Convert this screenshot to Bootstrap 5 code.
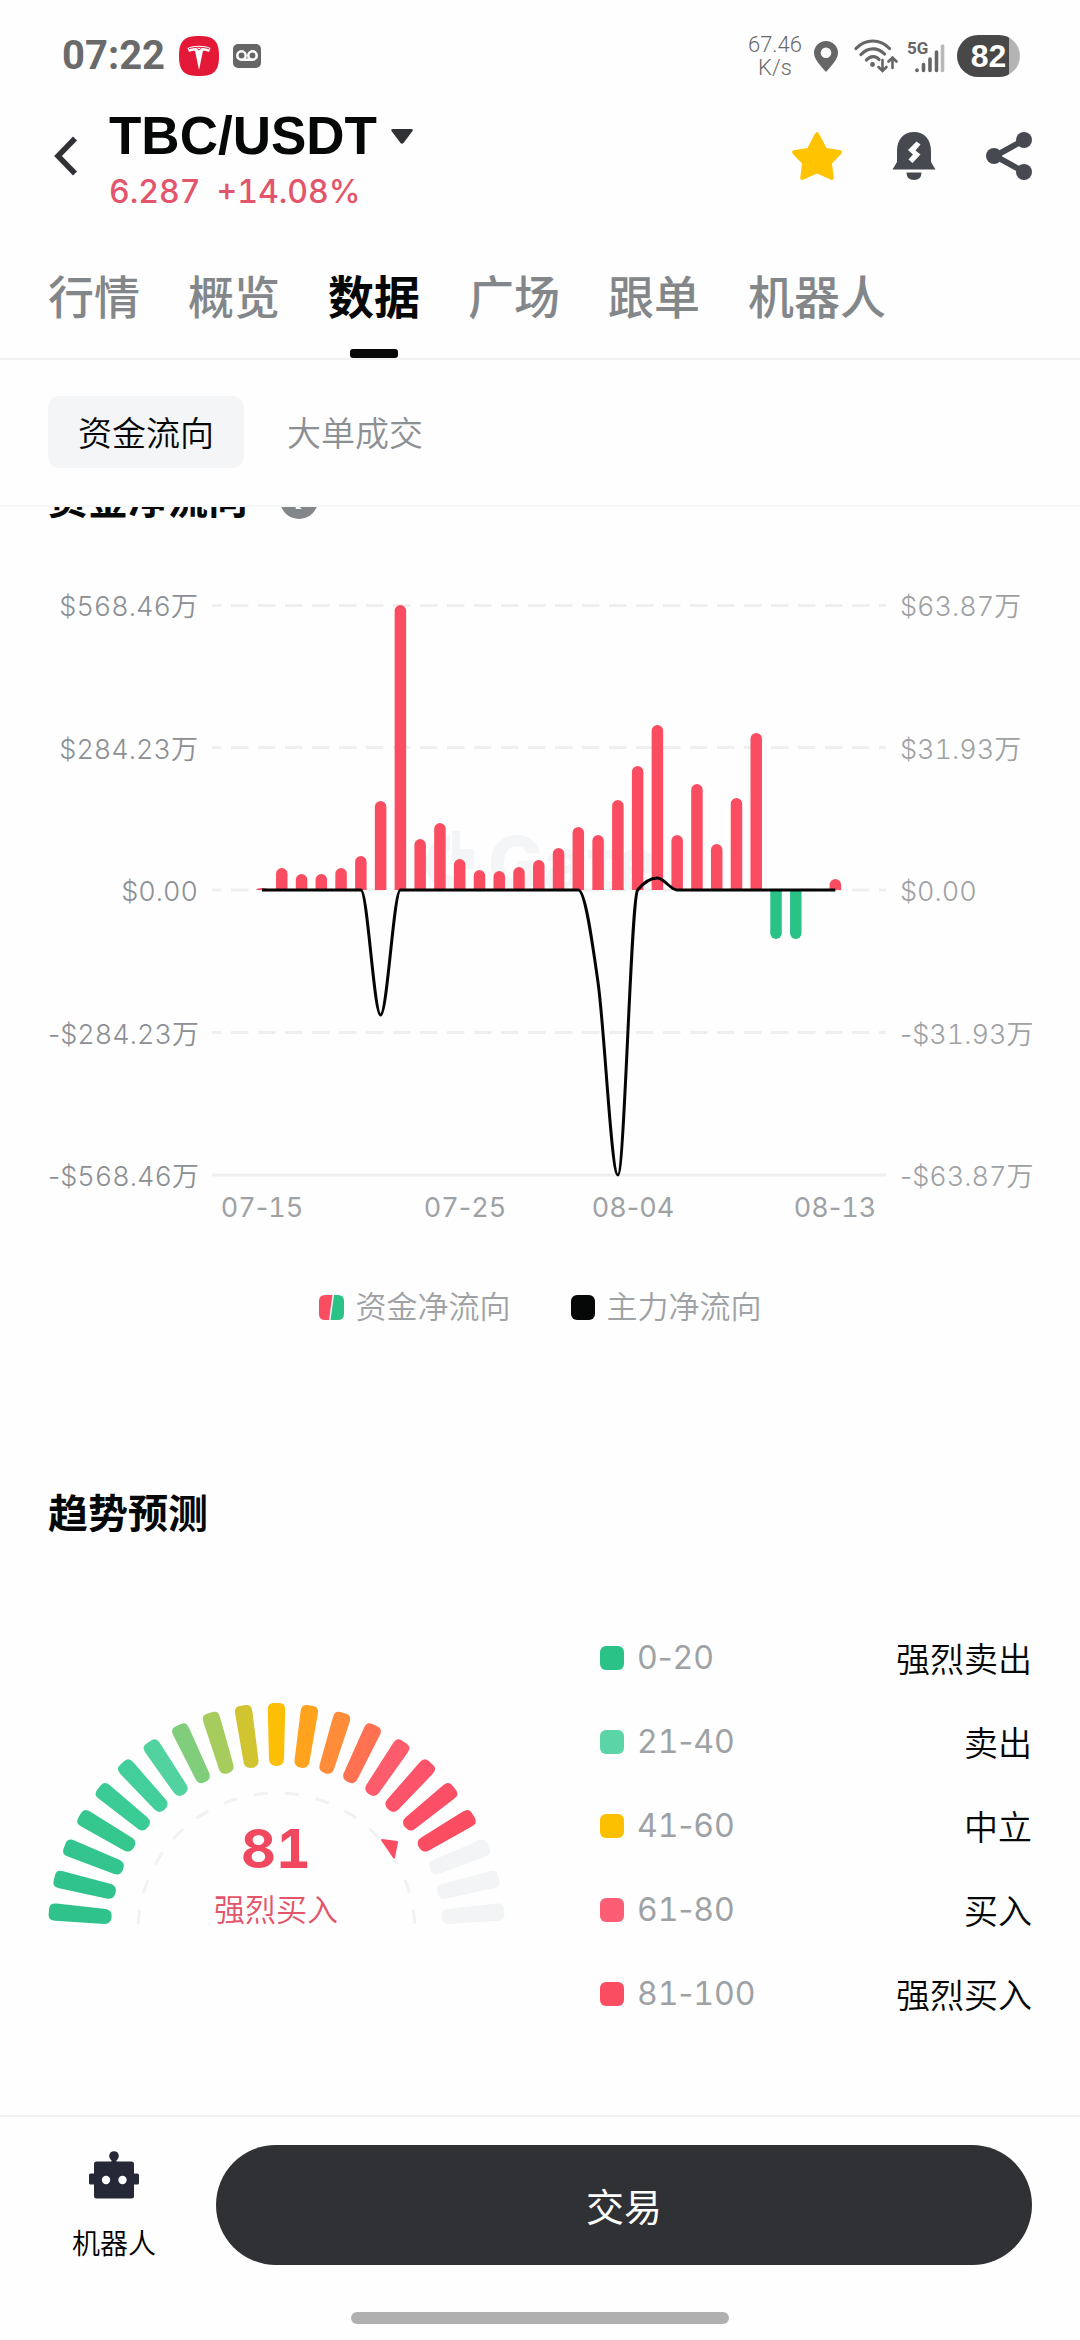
<!DOCTYPE html>
<html lang="zh-CN">
<head>
<meta charset="utf-8">
<meta name="viewport" content="width=device-width, initial-scale=1">
<title>TBC/USDT</title>
<link href="https://cdn.jsdelivr.net/npm/bootstrap@5.3.0/dist/css/bootstrap.min.css" rel="stylesheet">
<style>
  :root { --up: #fa4d61; --down: #2bc287; --ink: #060808; --mute: #84878a; --soft: #9fa2a5; --rule: #f0f1f2; }
  body { font-family: Inter, "Noto Sans CJK SC", sans-serif; color: var(--ink); background: #fefefe; font-variant-numeric: tabular-nums; }
  a { text-decoration: none; color: inherit; }
  svg { display: block; flex: none; }
  .gutter { padding-left: 48px; padding-right: 48px; }
  .top-stack { z-index: 10; background: #fefefe; }
  .dash { font-variant-numeric: normal; }

  .status-strip { height: 104px; padding: 8px 60px 0 62px; color: #6a6a6a; }
  .clock { font: 700 40px/48px Roboto, sans-serif; }
  .status-left { gap: 14px; }
  .status-right { gap: 12px; }
  .net-speed { font: 300 22px/23px Roboto, sans-serif; text-align: center; }
  .net-speed span { display: block; }
  .pin-icon { margin-right: 4px; }
  .signal-icon { margin-left: -4px; overflow: visible; }
  .battery-pill { width: 63px; height: 42px; border-radius: 21px; background: linear-gradient(90deg, #484848 82%, #b3b3b3 82%); color: #fff; font: 700 32px/42px "Liberation Sans", sans-serif; }

  .plain-btn { border: 0; background: none; padding: 0; }
  .back-btn { padding: 0 32px 8px 6px; }
  .pair-name { font: 700 53px/64px "Liberation Sans", sans-serif; }
  .pair-line { gap: 14px; }
  .pair-price { font-size: 32px; line-height: 48px; font-weight: 500; color: #e2556a; gap: 16px; }
  .tool-gap { gap: 50px; margin-bottom: 8px; }

  .main-tabs { gap: 48px; border-bottom: 2px solid var(--rule); }
  .main-tabs a { position: relative; padding: 51px 0 31px; font-size: 46px; line-height: 60px; font-weight: 500; color: var(--mute); white-space: nowrap; }
  .main-tabs a.active { color: var(--ink); font-weight: 700; }
  .main-tabs a.active::after { content: ""; position: absolute; left: 50%; bottom: 0; width: 48px; height: 9px; margin-left: -24px; border-radius: 3px; background: var(--ink); }

  .sub-tabs { gap: 13px; padding-top: 36px; padding-bottom: 37px; border-bottom: 2px solid #f6f7f7; }
  .sub-tabs a { padding: 4px 30px 0; font-size: 34px; line-height: 68px; font-weight: 350; border-radius: 12px; color: #8d9093; }
  .sub-tabs a.active { background: #f4f5f7; color: var(--ink); }

  .block-title { font-size: 40px; line-height: 40px; font-weight: 700; margin: 0; }
  .flow-title { margin-top: -27px; gap: 32px; }
  .help-dot { width: 38px; height: 38px; border-radius: 19px; background: #84878a; color: #fff; font: italic 700 28px/38px "Liberation Serif", serif; text-align: center; }

  .flow-chart { margin-top: 72px; gap: 14px; }
  .axis-col { height: 600px; font-size: 27px; line-height: 30px; white-space: nowrap; font-weight: 350; }
  .axis-left { width: 150px; color: #8c8f93; text-align: right; }
  .axis-right { width: 132px; color: var(--soft); }
  .plot-col { min-width: 0; padding-top: 13px; }
  .plot-col svg, .gauge-col svg { width: 100%; height: auto; overflow: visible; }
  .tick-text { font-size: 27px; fill: var(--soft); text-anchor: middle; }

  .series-legend { margin-top: 65px; gap: 60px; font-size: 31px; line-height: 40px; font-weight: 350; color: var(--soft); }
  .series-legend span { gap: 12px; }

  .trend-title { margin-top: 167px; }
  .trend-row { margin-top: 82px; gap: 96px; }
  .gauge-col { flex: 456 1 0; }
  .range-list { flex: 432 1 0; margin: 0; }
  .range-list li { height: 84px; font-size: 34px; line-height: 40px; }
  .range-key { color: var(--soft); font-size: 32px; }
  .range-val { padding-top: 4px; font-weight: 350; }
  .swatch { width: 24px; height: 24px; border-radius: 6px; margin-right: 13px; }
  .tone-ss { background: #2bc287; } .tone-s { background: #5bd5a6; } .tone-n { background: #fcc000; } .tone-b { background: #fb5d74; } .tone-sb { background: #fa4d61; }

  .action-dock { border-top: 2px solid var(--rule); padding-top: 28px; }
  .dock-row { gap: 36px; }
  .bot-link { width: 132px; padding-top: 6px; gap: 25px; font-size: 28px; line-height: 40px; font-weight: 350; color: #000; }
  .trade-btn { height: 120px; border-radius: 60px; border: 0; background: #303135; color: #fff; font-size: 38px; padding-top: 10px; }
  .trade-btn:hover { background: #3a3b40; color: #fff; }
  .home-bar { width: 378px; height: 12px; border-radius: 6px; background: #b0b0b0; margin: 47px auto 16px; }
</style>
</head>
<body>
<div class="d-flex flex-column min-vh-100">

  <header class="top-stack position-sticky top-0">
    <div class="status-strip d-flex align-items-center justify-content-between">
      <div class="status-left d-flex align-items-center">
        <span class="clock">07:22</span>
        <svg width="40" height="40" viewBox="0 0 40 40"><path d="M20 0c15 0 20 5 20 20s-5 20-20 20S0 35 0 20 5 0 20 0z" fill="#e31937"/><path d="M8.500 12c6-3 17-3 23 0l-1.500 4c-2-1-4-1.300-6-1.300L20 34l-4-19.300c-2 0-4 .3-6 1.300z" fill="#fff"/><path d="M10 12.800c6-2 14-2 20 0M20 14l-2.500-2M20 14l2.500-2" stroke="#e31937" stroke-width="1" fill="none"/></svg>
        <svg width="28" height="24" viewBox="0 0 28 24"><rect width="28" height="24" rx="5" fill="#666"/><circle cx="8.500" cy="11.500" r="4.200" fill="none" stroke="#fff" stroke-width="2.500"/><circle cx="19.500" cy="11.500" r="4.200" fill="none" stroke="#fff" stroke-width="2.500"/><path d="M8.500 15.700h11" stroke="#fff" stroke-width="2.500"/></svg>
      </div>
      <div class="status-right d-flex align-items-center">
        <div class="net-speed"><span>67.46</span><span>K/s</span></div>
        <svg class="pin-icon" width="24" height="31" viewBox="0 0 24 31"><path fill-rule="evenodd" d="M12 0a12 12 0 0 1 12 12c0 6-6 12-12 19C6 24 0 18 0 12A12 12 0 0 1 12 0zm0 6.500a5.300 5.300 0 1 0 0 10.600 5.300 5.300 0 0 0 0-10.600z" fill="#666"/></svg>
        <svg width="45" height="34" viewBox="0 0 45 34"><g fill="none" stroke="#666" stroke-width="3.200" stroke-linecap="round"><path d="M2 9.500c9.500-10 24-10 33.500 0M7 15.500c7-7.500 17-7.500 23.500-.5M12.500 21c4-4.300 9-4.300 12.500-.5"/><path stroke-width="2.600" d="M28.500 21v10.500M24.500 28l4 4 4-4M38.500 29V18.500M34.500 22.500l4-4 4 4"/></g><circle cx="18.500" cy="25.500" r="2.400" fill="#666"/></svg>
        <svg class="signal-icon" width="38" height="34" viewBox="0 0 38 34"><text x="0" y="15" font-family="Roboto, sans-serif" font-weight="700" font-size="17" fill="#666">5G</text><g stroke="#666" stroke-width="3.600" stroke-linecap="round"><path d="M10 31.500v-.5M16.500 31.500v-6M23 31.500V20M29.500 31.500V13"/><path stroke="#b8b8b8" d="M35.500 31.500V7"/></g></svg>
        <div class="battery-pill text-center">82</div>
      </div>
    </div>

    <div class="d-flex align-items-center justify-content-between gutter">
      <div class="d-flex align-items-center">
        <button class="plain-btn back-btn" aria-label="返回"><svg width="23" height="40" viewBox="0 0 23 40"><path d="M21 2.500L4 20l17 17.500" fill="none" stroke="#2f3136" stroke-width="5.500"/></svg></button>
        <div>
          <div class="pair-line d-flex align-items-center"><h1 class="pair-name m-0">TBC/USDT</h1><svg width="22" height="15" viewBox="0 0 22 15"><path d="M1.500 0h19q2 0 1 2l-9 12q-1.500 1.500-3 0l-9-12q-.8-2 1-2z" fill="#2f3136"/></svg></div>
          <div class="pair-price d-flex"><span>6.287</span><span>+14.08%</span></div>
        </div>
      </div>
      <div class="d-flex align-items-center tool-gap">
        <button class="plain-btn" aria-label="收藏"><svg width="50" height="48" viewBox="0 0 50 48"><path d="M23 1.500q2-3 4 0l7.500 14.500 14 2.300q2.500 1 .8 3.400L40 31.500l1.800 15q-.5 2-2.800 1.200L25 41.500l-14 6.200q-2.500.8-2.800-1.200l1.800-15L.7 21.700q-1.500-2.400.8-3.400l14-2.300z" fill="#ffc300"/></svg></button>
        <button class="plain-btn" aria-label="提醒"><svg width="44" height="48" viewBox="0 0 44 48"><path d="M5 19C5 7 12 0 22 0s17 7 17 19v11l4.500 7.500H.5L5 30z" fill="#464a50"/><path d="M14.500 40.500h15q0 7.500-7.500 7.500t-7.500-7.500z" fill="#464a50"/><path d="M24.500 9.500l4 3-5 6 5 4-8 8.500-4-3.500 4.500-5-5-4.500z" fill="#fff"/></svg></button>
        <button class="plain-btn" aria-label="分享"><svg width="46" height="48" viewBox="0 0 46 48"><path d="M38 8L9 24l29 16" fill="none" stroke="#464a50" stroke-width="6"/><g fill="#464a50"><circle cx="38" cy="8" r="8"/><circle cx="8" cy="24" r="8"/><circle cx="38" cy="40" r="8"/></g></svg></button>
      </div>
    </div>

    <nav class="main-tabs gutter d-flex">
      <a href="#">行情</a><a href="#">概览</a><a href="#" class="active">数据</a><a href="#">广场</a><a href="#">跟单</a><a href="#">机器人</a>
    </nav>
    <nav class="sub-tabs gutter d-flex">
      <a href="#" class="active">资金流向</a><a href="#">大单成交</a>
    </nav>
  </header>

  <main class="gutter flex-grow-1">
    <section>
      <div class="flow-title d-flex align-items-center">
        <h2 class="block-title">资金净流向</h2><span class="help-dot">i</span>
      </div>
      <div class="flow-chart d-flex align-items-start">
        <div class="axis-col axis-left d-flex flex-column justify-content-between">
          <span>$568.46万</span><span>$284.23万</span><span>$0.00</span><span><span class="dash">-</span>$284.23万</span><span><span class="dash">-</span>$568.46万</span>
        </div>
        <div class="plot-col flex-grow-1">
          <svg viewBox="0 0 674 617" role="img" aria-label="资金净流向图表">
            <g fill="#f4f5f6">
              <path d="M232 231a29 29 0 0 0 0 54h18v-14h-12a16 16 0 0 1 0-27v-14z"/><path d="M240 226h8v18h14v20h-14v-8h-8z"/>
              <text x="276" y="285" font-size="74" font-weight="800">Gate</text>
            </g>
            <g stroke="#efeff0" stroke-width="3">
              <path stroke-dasharray="17.500 9.500" stroke-dashoffset="8" d="M0 .5h674M0 142.500h674M0 285h674M0 427.500h674"/>
              <path d="M0 570h674"/>
            </g>
            <g id="bars"></g>
            <path fill="none" stroke="#050505" stroke-width="3" d="M50 285H148.900C155.500 285 162 410 168.600 410S181.800 285 188.400 285H366.300C372.900 285 379.500 330.600 386.100 378C392.700 425.400 399.300 570 405.900 570C412.500 570 419 293 425.600 285C432.200 277 438.800 273 445.400 273C452 273 458.600 285 465.200 285H623.300"/>
            <g class="tick-text"><text x="50" y="612">07<tspan class="dash">-</tspan>15</text><text x="253" y="612">07<tspan class="dash">-</tspan>25</text><text x="421" y="612">08<tspan class="dash">-</tspan>04</text><text x="623" y="612">08<tspan class="dash">-</tspan>13</text></g>
          </svg>
        </div>
        <div class="axis-col axis-right d-flex flex-column justify-content-between">
          <span>$63.87万</span><span>$31.93万</span><span>$0.00</span><span><span class="dash">-</span>$31.93万</span><span><span class="dash">-</span>$63.87万</span>
        </div>
      </div>
      <div class="series-legend d-flex justify-content-center">
        <span class="d-flex align-items-center"><svg width="25" height="25" viewBox="0 0 25 25"><path d="M6 0h7.500L10 25H6q-6 0-6-6V6q0-6 6-6z" fill="#fa4d61"/><path d="M15 0h4q6 0 6 6v13q0 6-6 6h-7.500z" fill="#2bc287"/></svg>资金净流向</span>
        <span class="d-flex align-items-center"><svg width="24" height="25"><rect width="24" height="25" rx="6" fill="#060808"/></svg>主力净流向</span>
      </div>
    </section>

    <section>
      <h2 class="block-title trend-title">趋势预测</h2>
      <div class="trend-row d-flex align-items-center">
        <div class="gauge-col">
          <svg viewBox="0 0 456 246" role="img" aria-label="趋势预测 81 强烈买入">
            <g id="ticks"></g>
            <path d="M90.200 221A138.500 138.500 0 0 1 366.800 221" fill="none" stroke="#f1f2f3" stroke-width="3" stroke-dasharray="14 17.200"/>
            <path d="M334 137l15 2-3 15.500z" fill="#fa4d61" stroke="#fa4d61" stroke-width="2" stroke-linejoin="round"/>
            <text x="228" y="165" text-anchor="middle" font-size="54" font-weight="700" fill="#f0495f">81</text>
            <text x="228" y="218" text-anchor="middle" font-size="31" font-weight="350" fill="#e2556a">强烈买入</text>
          </svg>
        </div>
        <ul class="range-list list-unstyled">
          <li class="d-flex align-items-center justify-content-between"><span class="range-key d-flex align-items-center"><i class="swatch tone-ss"></i>0<span class="dash">-</span>20</span><span class="range-val">强烈卖出</span></li>
          <li class="d-flex align-items-center justify-content-between"><span class="range-key d-flex align-items-center"><i class="swatch tone-s"></i>21<span class="dash">-</span>40</span><span class="range-val">卖出</span></li>
          <li class="d-flex align-items-center justify-content-between"><span class="range-key d-flex align-items-center"><i class="swatch tone-n"></i>41<span class="dash">-</span>60</span><span class="range-val">中立</span></li>
          <li class="d-flex align-items-center justify-content-between"><span class="range-key d-flex align-items-center"><i class="swatch tone-b"></i>61<span class="dash">-</span>80</span><span class="range-val">买入</span></li>
          <li class="d-flex align-items-center justify-content-between"><span class="range-key d-flex align-items-center"><i class="swatch tone-sb"></i>81<span class="dash">-</span>100</span><span class="range-val">强烈买入</span></li>
        </ul>
      </div>
    </section>
  </main>

  <footer class="action-dock">
    <div class="dock-row gutter d-flex align-items-start">
      <a href="#" class="bot-link d-flex flex-column align-items-center">
        <svg width="50" height="48" viewBox="0 0 50 48"><g fill="#252836"><circle cx="25" cy="5" r="4.800"/><path d="M22.500 6h5v8h-5z"/><rect x="5" y="10.500" width="40" height="37" rx="2.500"/><rect y="22.500" width="50" height="11" rx="1.500"/></g><circle cx="17" cy="29" r="4.200" fill="#fff"/><circle cx="33.500" cy="29" r="4.200" fill="#fff"/></svg>
        <span>机器人</span>
      </a>
      <button type="button" class="btn trade-btn flex-grow-1">交易</button>
    </div>
    <div class="home-bar"></div>
  </footer>
</div>

<script src="https://cdn.jsdelivr.net/npm/bootstrap@5.3.0/dist/js/bootstrap.bundle.min.js"></script>
<script>
  // Daily net flow, in plot units above or below the zero line
  const flow = [2, 22, 16, 16, 22, 34, 89, 285, 51, 67, 31, 20, 19, 23, 30, 42, 63, 55, 90, 124, 165, 55, 106, 46, 92, 157, -49, -49, 0, 11];
  document.getElementById('bars').innerHTML = flow.map((v, i) => {
    if (!v) return '';
    const x = 50 + i * 19.77 - 5.75, r = Math.min(5.75, Math.abs(v)), s = v > 0 ? 1 : -1, y = 285 - v + s * r;
    return `<path fill="${v > 0 ? '#fa4d61' : '#2bc287'}" d="M${x} 285V${y}a5.75 ${r} 0 0 ${v > 0 ? 1 : 0} 11.5 0V285z"/>`;
  }).join('');

  // Gauge: 21 ticks, 8.5 degrees apart, the last three unlit
  const tones = ['#2fc28a', '#30c38b', '#33c58d', '#36c78f', '#3bcb94', '#42cf99', '#52d29f', '#80ce7c', '#a5cc5d', '#d0c531', '#fcbf06', '#ffa31f', '#ff8c38', '#ff7150', '#fc5c6c', '#fb5369', '#fa4f65', '#fa4d61', '#f2f4f5', '#f2f4f5', '#f2f4f5'];
  document.getElementById('ticks').innerHTML = tones.map((c, i) =>
    `<path fill="${c}" transform="rotate(${(i - 10) * 8.5} 228.5 228.5)" d="M225.500 0h6q6 0 5.700 7l-1.200 49.500q-.5 6.500-7.500 6.500t-7.500-6.500l-1.200-49.500q-.3-7 5.700-7z"/>`).join('');
</script>
</body>
</html>
